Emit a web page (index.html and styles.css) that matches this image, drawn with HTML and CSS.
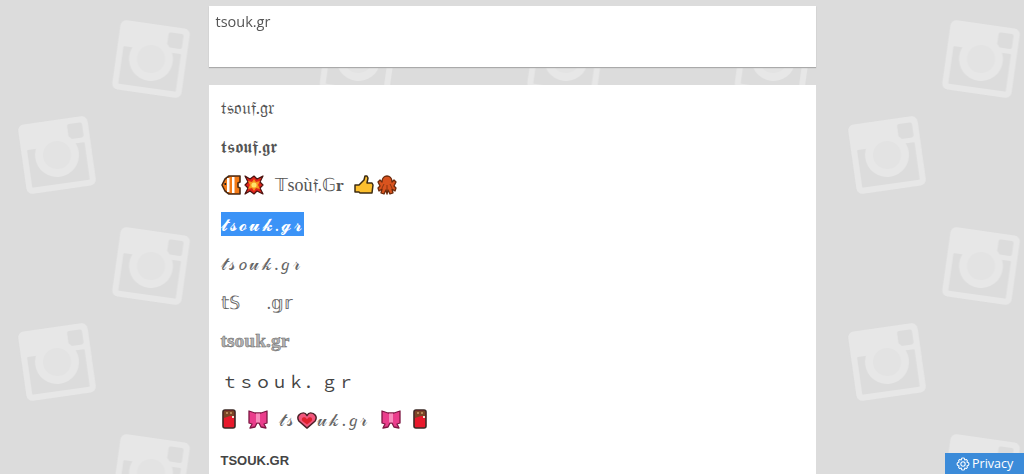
FILE: index.html
```html
<!DOCTYPE html>
<html lang="en">
<head>
    <meta charset="UTF-8">
    <meta name="viewport" content="width=device-width, initial-scale=1.0">
    <title>Fancy Text</title>
    <link rel="stylesheet" href="styles.css">
</head>
<body>
    <!-- wallpaper, and the emoji sprites used in the rows -->
    <svg class="wallpaper" width="100%" height="100%" aria-hidden="true">
        <defs>
            <symbol id="camera" viewBox="-35 -35 70 70" overflow="visible">
                <rect x="-35" y="-35" width="70" height="70" rx="6" fill="#e7e7e7"/>
                <rect x="14" y="-29" width="15" height="15" rx="2" fill="#dcdcdc"/>
                <rect x="-29" y="-9" width="58" height="38" rx="1" fill="#dcdcdc"/>
                <circle r="22" fill="#e7e7e7"/>
                <circle r="14" fill="#e3e3e3"/>
            </symbol>
            <pattern id="tile" width="207.500" height="207" patternUnits="userSpaceOnUse">
                <use href="#camera" x="-35" y="-35" width="70" height="70" transform="translate(151 59) rotate(8)"/>
                <use href="#camera" x="-35" y="-35" width="70" height="70" transform="translate(57 155) rotate(-8)"/>
            </pattern>

            <symbol id="fish" viewBox="0 0 20 20">
                <path d="M1 10 4 4 8 1H19V7L17 8V12L19 13V19H8L4 16Z" fill="#f47a16" stroke="#4a2a14" stroke-width="1.600" stroke-linejoin="round"/>
                <path d="M6 3h2.500v14H6zM11 2h2.500v16H11z" fill="#fff"/>
                <rect x="3.500" y="8" width="1.600" height="2" fill="#222"/>
            </symbol>
            <symbol id="boom" viewBox="0 0 20 20">
                <path d="M1 1 6 4 10 1 13 4 19 1 16 7 19 10 16 13 19 19 13 16 10 19 6 16 1 19 4 13 1 10 4 7Z" fill="#e2231a" stroke="#4a1410" stroke-width="1.200" stroke-linejoin="round"/>
                <path d="M10 4 12 7 16 6 14 10 16 14 12 13 10 16 8 13 4 14 6 10 4 6 8 7Z" fill="#f7941d"/>
                <circle cx="10" cy="10" r="2.600" fill="#ffe36b"/>
            </symbol>
            <symbol id="thumb" viewBox="0 0 20 20">
                <path d="M1 10H5L10 5 11 1H13L14 3 13 8H18L19 10 18 18H6L5 17H1Z" fill="#fcbf2e" stroke="#3d2c14" stroke-width="1.500" stroke-linejoin="round"/>
            </symbol>
            <symbol id="octopus" viewBox="0 0 20 20">
                <path d="M5 7C5 -1 15 -1 15 7L17 5 19 7 17 11 19 13 18 16 15 14 16 18 13 19 11 15 10 19 9 15 7 19 4 18 5 14 2 16 1 13 3 11 1 7 3 5Z" fill="#d9531e" stroke="#6b2a0c" stroke-width="1.300" stroke-linejoin="round"/>
                <path d="M7 9 5 13M13 9l2 4M10 10v5" stroke="#8a3610" stroke-width="1"/>
            </symbol>
            <symbol id="choc" viewBox="0 0 14 20">
                <rect x="1" y="1" width="12" height="18" rx="2" fill="#e8192c" stroke="#3b2a26" stroke-width="1.600"/>
                <path d="M2 2h10v5L8 7 2 9Z" fill="#7a4526"/>
                <path d="M4 3h2v2H4zM8 3h2v2H8z" fill="#b9855a"/>
                <path d="M10 7h2v2h-2z" fill="#f3dfd0"/>
            </symbol>
            <symbol id="bow" viewBox="0 0 20 20">
                <path d="M1 2 7 4H13L19 2 19 14 16 15 18 19 13 18 11 14H9L7 18 2 19 4 15 1 14Z" fill="#ea3d8c" stroke="#7d1843" stroke-width="1.300" stroke-linejoin="round"/>
                <rect x="8" y="4.500" width="4" height="9" fill="#f78cbc"/>
            </symbol>
            <symbol id="heart" viewBox="0 0 22 19" preserveAspectRatio="none">
                <path d="M11 18 2 10C-1 5 3 1 7 1 9 1 10 2 11 4 12 2 13 1 15 1 19 1 23 5 20 10Z" fill="#f0567c" stroke="#4a2028" stroke-width="1.600" stroke-linejoin="round"/>
                <path d="M11 14 6 10C4 7 7 5 9 6L11 8 13 6C15 5 18 7 16 10Z" fill="#e0202e"/>
            </symbol>
        </defs>
        <rect width="100%" height="100%" fill="url(#tile)"/>
    </svg>

    <div class="container">
        <textarea class="input-box" spellcheck="false">tsouk.gr</textarea>

        <div class="results">
            <div class="row">𝔱𝔰𝔬𝔲𝔣.𝔤𝔯</div>
            <div class="row">𝖙𝖘𝖔𝖚𝖋.𝖌𝖗</div>
            <div class="row">
                <svg class="emoji"><use href="#fish"/></svg>
                <svg class="emoji emoji-next"><use href="#boom"/></svg>
                <span class="deco">𝕋soù𝔣.𝔾𝐫</span>
                <svg class="emoji"><use href="#thumb"/></svg>
                <svg class="emoji emoji-next"><use href="#octopus"/></svg>
            </div>
            <div class="row"><span class="selected">𝓽𝓼𝓸𝓾𝓴.𝓰𝓻</span></div>
            <div class="row script">𝓉𝓈𝑜𝓊𝓀.𝑔𝓇</div>
            <div class="row struck">𝕥𝕊<span class="blank"></span>.𝕘𝕣</div>
            <div class="row outline">tsouk.gr</div>
            <div class="row wide">ｔｓｏｕｋ．ｇｒ</div>
            <div class="row">
                <svg class="emoji emoji-choc"><use href="#choc"/></svg>
                <svg class="emoji emoji-bow"><use href="#bow"/></svg>
                <span class="script heart-text">𝓉𝓈<svg class="emoji-heart"><use href="#heart"/></svg>𝓊𝓀.𝑔𝓇</span>
                <svg class="emoji"><use href="#bow"/></svg>
                <svg class="emoji emoji-choc emoji-last"><use href="#choc"/></svg>
            </div>
            <div class="row caps">TSOUK.GR</div>
        </div>
    </div>

    <button class="privacy">
        <svg class="gear" viewBox="0 0 16 16">
            <path d="M8 1 9.500 1.500 10 3.300 11.800 2.800 13 4 12.500 5.800 14.300 6.500 14.800 8 14.300 9.500 12.500 10.200 13 12 11.800 13.200 10 12.700 9.500 14.500 8 15 6.500 14.500 6 12.700 4.200 13.200 3 12 3.500 10.200 1.700 9.500 1.200 8 1.700 6.500 3.500 5.800 3 4 4.200 2.800 6 3.300 6.500 1.500Z" fill="none" stroke="#fff" stroke-width="1.200" stroke-linejoin="round"/>
            <circle cx="8" cy="8" r="2.500" fill="none" stroke="#fff" stroke-width="1.200"/>
        </svg>
        Privacy
    </button>
</body>
</html>
```

FILE: styles.css
```css
html, body {
    height: 100%;
}

body {
    margin: 0;
    overflow: hidden;
    font-family: "Open Sans", sans-serif;
    background-color: #dcdcdc;
    color: #555;
}

.wallpaper {
    position: fixed;
    top: 0;
    left: 0;
    z-index: -1;
}

.container {
    display: flex;
    flex-direction: column;
    width: 607px;
    height: calc(100% - 6px);
    margin: 6px auto 0;
}

.input-box {
    flex: none;
    display: block;
    width: 100%;
    height: 61px;
    box-sizing: border-box;
    padding: 6px 7px;
    border: none;
    outline: none;
    resize: none;
    overflow: hidden;
    background: #fff;
    box-shadow: 0 1px 1px #aaa;
    font-family: "Open Sans", sans-serif;
    font-size: 14.500px;
    line-height: 20px;
    color: #555;
}

.results {
    flex: 1;
    min-height: 0;
    margin-top: 18px;
    padding: 2px 12px 0;
    background: #fff;
}

.row {
    display: flex;
    align-items: center;
    height: 39px;
    font-size: 18px;
    white-space: nowrap;
}

.selected {
    line-height: 24px;
    height: 24px;
    letter-spacing: 2px;
    background: #3b93f7;
    color: #fff;
}

.script {
    letter-spacing: 2.500px;
    color: #666;
}

.struck {
    color: #666;
}

.blank {
    width: 27px;
}

.outline {
    font-family: "Liberation Serif", serif;
    font-weight: bold;
    font-size: 19.500px;
    color: #b4b4b4;
    -webkit-text-stroke: 0.5px #666;
}

.wide {
    padding: 2px 0 0 1px;
    box-sizing: border-box;
    font-family: "Noto Sans CJK JP", sans-serif;
    font-size: 16.600px;
    color: #444;
}

.caps {
    box-sizing: border-box;
    height: 36px;
    padding-top: 8px;
    font-family: "Liberation Sans", sans-serif;
    font-size: 13px;
    font-weight: bold;
    color: #444;
}

.emoji {
    flex: none;
    width: 20px;
    height: 20px;
}

.emoji-next {
    margin-left: 3px;
}

.emoji-choc {
    width: 14px;
    margin-left: 1px;
}

.emoji-bow {
    margin-left: 12px;
}

.emoji-last {
    margin-left: 12px;
}

.emoji-heart {
    width: 20px;
    height: 17px;
    vertical-align: -3px;
}

.deco {
    margin: 0 10px 0 11px;
    font-family: "Liberation Serif", serif;
}

.heart-text {
    margin: 0 10px 0 11px;
}

.privacy {
    position: fixed;
    right: 0;
    bottom: 0;
    display: flex;
    align-items: center;
    gap: 2px;
    width: 79px;
    height: 21px;
    padding: 0 0 0 11px;
    border: none;
    background: #3b8bd9;
    color: #fff;
    font-family: "Open Sans", sans-serif;
    font-size: 12.500px;
}

.gear {
    width: 14px;
    height: 14px;
}
```
